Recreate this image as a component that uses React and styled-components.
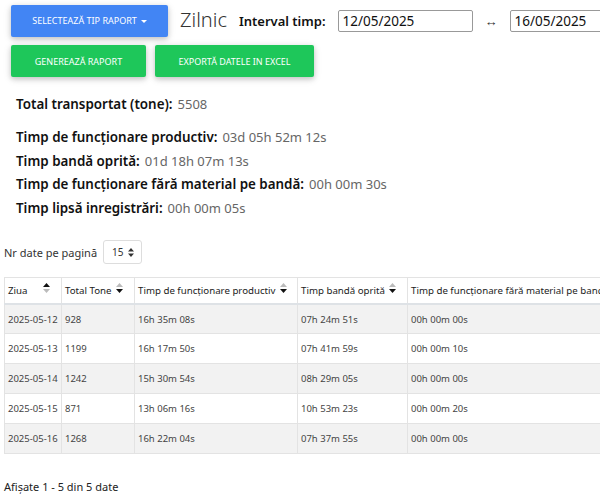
import React from "react";
import styled, { createGlobalStyle } from "styled-components";

const Global = createGlobalStyle`
  html, body { margin: 0; padding: 0; background: #fff; }
  body { font-family: "Noto Sans", "Open Sans", sans-serif; color: #212529; overflow: hidden; }
  * { box-sizing: border-box; }
`;

const Page = styled.div`
  width: 600px;
  height: 500px;
  overflow: hidden;
  padding: 4px 0 0 4px;
`;

const Toolbar = styled.div`
  display: flex;
  align-items: center;
  gap: 12px;
  padding-left: 7px;
  height: 33px;
  white-space: nowrap;
`;

const Btn = styled.button`
  height: 32px;
  width: ${(p) => p.$w}px;
  border: none;
  border-radius: 2px;
  background: ${(p) => (p.$variant === "blue" ? "#4285f4" : "#1ec75a")};
  color: #fff;
  font-family: inherit;
  font-size: 9px;
  text-transform: uppercase;
  box-shadow: 0 2px 5px rgba(0, 0, 0, 0.16), 0 2px 8px rgba(0, 0, 0, 0.12);
  display: flex;
  align-items: center;
  justify-content: center;
  gap: 4px;
  padding: 0;
  flex-shrink: 0;
`;

const Caret = styled.span`
  width: 0;
  height: 0;
  border-left: 3px solid transparent;
  border-right: 3px solid transparent;
  border-top: 3px solid #fff;
  margin-top: 1px;
`;

const Title = styled.span`
  font-size: 20px;
  font-weight: 300;
  color: #333;
  margin-top: -2px;
`;

const Label = styled.span`
  font-size: 13px;
  font-weight: 600;
  color: #111;
`;

const DateInput = styled.div`
  width: 135px;
  height: 22px;
  border: 1px solid #999;
  border-radius: 2px;
  font-size: 13.5px;
  line-height: 20px;
  padding-left: 4px;
  color: #111;
  flex-shrink: 0;
`;

const Arrow = styled.span`
  font-size: 13px;
  color: #333;
`;

const ButtonRow = styled.div`
  display: flex;
  gap: 9px;
  padding-left: 7px;
  margin-top: 8px;
`;

const Stats = styled.div`
  padding-left: 12px;
  margin-top: 16px;
`;

const StatLine = styled.div`
  font-size: 13.4px;
  line-height: 23.6px;
  margin-bottom: ${(p) => (p.$gap ? 9.5 : 0)}px;
`;

const StatLabel = styled.span`
  font-weight: 600;
  color: #111;
`;

const StatValue = styled.span`
  color: #666;
  margin-left: 5px;
  font-size: 13px;
`;

const PagerRow = styled.div`
  display: flex;
  align-items: center;
  gap: 6px;
  margin-top: 20px;
  font-size: 11px;
  color: #333;
`;

const Select = styled.div`
  width: 39px;
  height: 24px;
  border: 1px solid #ddd;
  border-radius: 3px;
  font-size: 10px;
  display: flex;
  align-items: center;
  padding-left: 8px;
  gap: 4px;
  color: #333;
`;

const TableWrap = styled.div`
  margin-top: 13px;
  width: 700px;
`;

const Table = styled.table`
  border-collapse: collapse;
  table-layout: fixed;
  width: 700px;
  font-size: 9.5px;
  color: #444;
`;

const Th = styled.th`
  text-align: left;
  font-weight: 400;
  font-size: 9.7px;
  color: #222;
  height: 26px;
  padding: 0 3px;
  border: 1px solid #e3e3e3;
  border-bottom: 2px solid #dee2e6;
  white-space: nowrap;
  overflow: hidden;
`;

const Td = styled.td`
  height: 30px;
  padding: 0 3px;
  border: 1px solid #e3e3e3;
  white-space: nowrap;
`;

const Tr = styled.tr`
  background: ${(p) => (p.$striped ? "#f2f2f2" : "#fff")};
`;

const HeadInner = styled.span`
  display: flex;
  align-items: center;
  justify-content: ${(p) => (p.$spread ? "space-between" : "flex-start")};
  padding-right: ${(p) => (p.$spread ? 8 : 0)}px;
`;

const SortIcon = ({ active }) => (
  <svg width="7" height="10" viewBox="0 0 7 10" style={{ marginLeft: 4, marginTop: -5, flexShrink: 0 }}>
    <path d="M3.5 0 L7 4 L0 4 Z" fill={active === "up" ? "#111" : "#bbb"} />
    <path d="M3.5 10 L7 6 L0 6 Z" fill={active === "down" ? "#111" : "#bbb"} />
  </svg>
);

const Footer = styled.div`
  margin-top: 25px;
  font-size: 11px;
  color: #222;
`;

const stats = [
  ["Total transportat (tone):", "5508", true],
  ["Timp de funcționare productiv:", "03d 05h 52m 12s"],
  ["Timp bandă oprită:", "01d 18h 07m 13s"],
  ["Timp de funcționare fără material pe bandă:", "00h 00m 30s"],
  ["Timp lipsă inregistrări:", "00h 00m 05s"],
];

const rows = [
  ["2025-05-12", "928", "16h 35m 08s", "07h 24m 51s", "00h 00m 00s"],
  ["2025-05-13", "1199", "16h 17m 50s", "07h 41m 59s", "00h 00m 10s"],
  ["2025-05-14", "1242", "15h 30m 54s", "08h 29m 05s", "00h 00m 00s"],
  ["2025-05-15", "871", "13h 06m 16s", "10h 53m 23s", "00h 00m 20s"],
  ["2025-05-16", "1268", "16h 22m 04s", "07h 37m 55s", "00h 00m 00s"],
];

const cols = [
  { label: "Ziua", w: 57, active: "up", spread: true },
  { label: "Total Tone", w: 73, active: "down" },
  { label: "Timp de funcționare productiv", w: 163, active: "down" },
  { label: "Timp bandă oprită", w: 110, active: "down" },
  { label: "Timp de funcționare fără material pe bandă", w: 297, active: "down" },
];

export default function App() {
  return (
    <Page>
      <Global />
      <Toolbar>
        <Btn $variant="blue" $w={157}>
          Selectează tip raport <Caret />
        </Btn>
        <Title>Zilnic</Title>
        <Label>Interval timp:</Label>
        <DateInput>12/05/2025</DateInput>
        <Arrow>↔</Arrow>
        <DateInput>16/05/2025</DateInput>
      </Toolbar>
      <ButtonRow>
        <Btn $w={135}>Generează raport</Btn>
        <Btn $w={159}>Exportă datele in Excel</Btn>
      </ButtonRow>
      <Stats>
        {stats.map(([l, v, gap]) => (
          <StatLine key={l} $gap={gap}>
            <StatLabel>{l}</StatLabel>
            <StatValue>{v}</StatValue>
          </StatLine>
        ))}
      </Stats>
      <PagerRow>
        Nr date pe pagină
        <Select>
          15
          <svg width="6" height="9" viewBox="0 0 6 9">
            <path d="M3 0 L6 3.5 L0 3.5 Z M3 9 L6 5.5 L0 5.5 Z" fill="#333" />
          </svg>
        </Select>
      </PagerRow>
      <TableWrap>
        <Table>
          <colgroup>
            {cols.map((c) => (
              <col key={c.label} style={{ width: c.w }} />
            ))}
          </colgroup>
          <thead>
            <tr>
              {cols.map((c) => (
                <Th key={c.label}>
                  <HeadInner $spread={c.spread}>
                    {c.label}
                    <SortIcon active={c.active} />
                  </HeadInner>
                </Th>
              ))}
            </tr>
          </thead>
          <tbody>
            {rows.map((r, i) => (
              <Tr key={r[0]} $striped={i % 2 === 0}>
                {r.map((v, j) => (
                  <Td key={j}>{v}</Td>
                ))}
              </Tr>
            ))}
          </tbody>
        </Table>
      </TableWrap>
      <Footer>Afișate 1 - 5 din 5 date</Footer>
    </Page>
  );
}
